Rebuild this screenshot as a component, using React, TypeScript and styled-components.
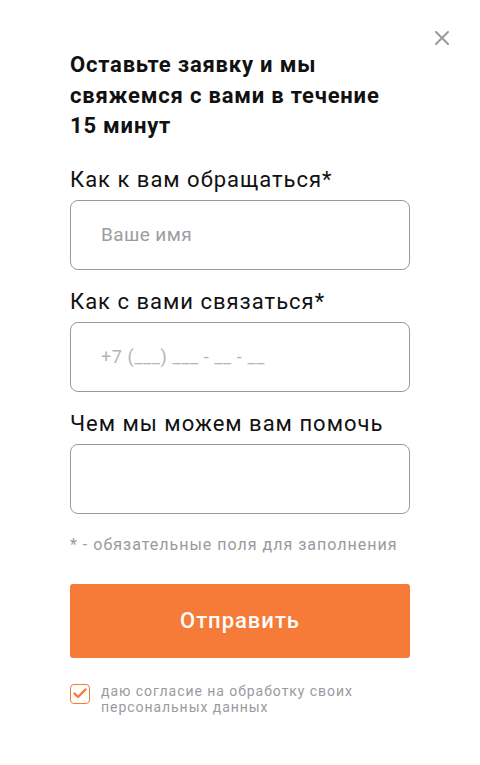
import React from "react";
import styled, { createGlobalStyle } from "styled-components";

const GlobalStyle = createGlobalStyle`
  html, body {
    margin: 0;
    padding: 0;
    background: #ffffff;
  }
  body {
    font-family: Roboto, "Noto Sans", Arial, sans-serif;
    color: #111111;
  }
  * { box-sizing: border-box; }
`;

// Modal body
const Modal = styled.div`
  position: relative;
  width: 480px;
  height: 765px;
  background: #ffffff;
  padding: 50px 70px 0 70px;
`;

const CloseButton = styled.button`
  position: absolute;
  top: 30px;
  right: 30px;
  width: 16px;
  height: 16px;
  padding: 0;
  border: none;
  background: transparent;
  cursor: pointer;
  display: flex;
  align-items: center;
  justify-content: center;
`;

const Title = styled.h2`
  margin: 0 0 25px;
  font-size: 22px;
  line-height: 30.5px;
  font-weight: 700;
  letter-spacing: 0.8px;
  color: #111111;
`;

const Form = styled.form`
  display: flex;
  flex-direction: column;
`;

const Field = styled.div`
  display: flex;
  flex-direction: column;
  gap: 7px;
  margin-bottom: 19px;
`;

const Label = styled.label`
  font-size: 22px;
  line-height: 26px;
  font-weight: 400;
  letter-spacing: 1px;
  color: #111111;
`;

const Input = styled.input<{ $small?: boolean }>`
  width: 340px;
  height: 70px;
  border: 1px solid #9a9a9a;
  border-radius: 8px;
  padding: 0 30px;
  font-family: inherit;
  font-size: ${(p) => (p.$small ? "18px" : "19px")};
  letter-spacing: ${(p) => (p.$small ? "0.6px" : "0.4px")};
  color: #111111;
  outline: none;

  &::placeholder {
    color: ${(p) => (p.$small ? "#b4b4b8" : "#9c9ca2")};
  }
`;

const Note = styled.p`
  margin: 2px 0 0;
  font-size: 16px;
  line-height: 20px;
  letter-spacing: 1px;
  color: #9a9aa0;
`;

const SubmitButton = styled.button`
  margin-top: 29px;
  width: 340px;
  height: 74px;
  border: none;
  border-radius: 3px;
  background: #f67a38;
  color: #ffffff;
  font-family: inherit;
  font-size: 22px;
  font-weight: 500;
  letter-spacing: 1px;
  cursor: pointer;
`;

const Consent = styled.label`
  margin-top: 25px;
  display: flex;
  align-items: flex-start;
  gap: 11px;
  cursor: pointer;
`;

const CheckBox = styled.span`
  flex: none;
  width: 20px;
  height: 20px;
  margin-top: 1px;
  border: 1.5px solid #f67a38;
  border-radius: 4px;
  display: flex;
  align-items: center;
  justify-content: center;
`;

const ConsentText = styled.span`
  font-size: 14px;
  line-height: 16px;
  letter-spacing: 0.95px;
  color: #9a9aa0;
`;

const App: React.FC = () => {
  return (
    <>
      <GlobalStyle />
      <Modal>
        <CloseButton aria-label="Закрыть">
          <svg width="14" height="14" viewBox="0 0 14 14">
            <path d="M1 1L13 13M13 1L1 13" stroke="#9a9aa0" strokeWidth="2" strokeLinecap="round" />
          </svg>
        </CloseButton>

        <Title>
          Оставьте заявку и мы
          <br />
          свяжемся с вами в течение
          <br />
          15 минут
        </Title>

        <Form onSubmit={(e) => e.preventDefault()}>
          <Field>
            <Label>Как к вам обращаться*</Label>
            <Input placeholder="Ваше имя" />
          </Field>
          <Field>
            <Label>Как с вами связаться*</Label>
            <Input $small placeholder="+7 (___) ___ - __ - __" />
          </Field>
          <Field>
            <Label>Чем мы можем вам помочь</Label>
            <Input />
          </Field>

          <Note>* - обязательные поля для заполнения</Note>

          <SubmitButton type="submit">Отправить</SubmitButton>

          <Consent>
            <CheckBox>
              <svg width="14" height="11" viewBox="0 0 14 11">
                <path d="M1.5 5.5L5 9L12.5 1.5" fill="none" stroke="#f67a38" strokeWidth="2.4" strokeLinecap="round" strokeLinejoin="round" />
              </svg>
            </CheckBox>
            <ConsentText>
              даю согласие на обработку своих
              <br />
              персональных данных
            </ConsentText>
          </Consent>
        </Form>
      </Modal>
    </>
  );
};

export default App;
